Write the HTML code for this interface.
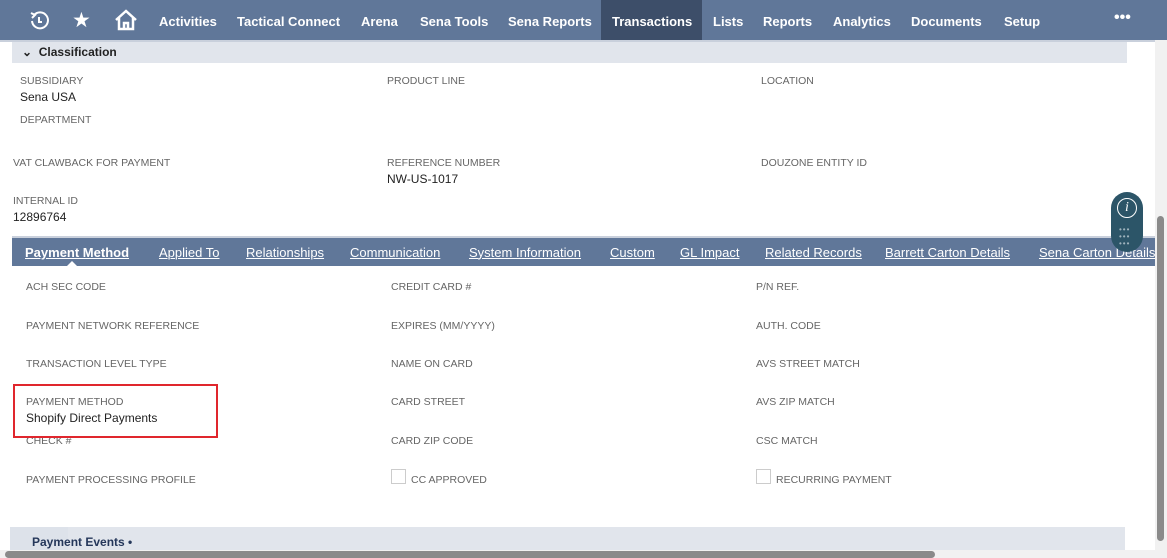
<!DOCTYPE html>
<html><head><meta charset="utf-8"><style>
*{margin:0;padding:0;box-sizing:border-box}
body{width:1167px;height:558px;overflow:hidden;background:#fff;font-family:"Liberation Sans",sans-serif;position:relative;color:#333}
.a{position:absolute;white-space:nowrap}
.nav{left:0;top:0;width:1167px;height:40px;background:#607799}
.ni{top:14px;color:#fff;font-size:13px;font-weight:bold}
.l{font-size:10.5px;color:#666}
.v{font-size:12px;color:#222}
.tab{top:245px;color:#fff;font-size:13px;text-decoration:underline;text-decoration-thickness:1px}
.cb{width:15px;height:15px;border:1px solid #ccc}
</style></head><body>
<div class="a nav"></div>
<div class="a" style="left:0;top:40px;width:1167px;height:2px;background:#c9d0dc"></div>
<svg class="a" style="left:28px;top:10px" width="22" height="22" viewBox="0 0 22 22"><path d="M6 5 A8 8 0 1 1 4 11" fill="none" stroke="#fff" stroke-width="2"/><path d="M3 3 L7 5 L4 8" fill="none" stroke="#fff" stroke-width="2"/><path d="M11 7 V12 H14" fill="none" stroke="#fff" stroke-width="2"/></svg>
<div class="a" style="left:72px;top:8px;color:#fff;font-size:21px">★</div>
<svg class="a" style="left:114px;top:9px" width="24" height="22" viewBox="0 0 24 22"><path d="M2 11 L12 2 L22 11 M5 9 V20 H19 V9 M10 20 V14 H14 V20" fill="none" stroke="#fff" stroke-width="2.5"/></svg>
<div class="a ni" style="left:159px">Activities</div>
<div class="a ni" style="left:237px">Tactical Connect</div>
<div class="a ni" style="left:361px">Arena</div>
<div class="a ni" style="left:420px">Sena Tools</div>
<div class="a ni" style="left:508px">Sena Reports</div>
<div class="a" style="left:601px;top:0;width:101px;height:40px;background:#3d4e69"></div>
<div class="a ni" style="left:612px">Transactions</div>
<div class="a ni" style="left:713px">Lists</div>
<div class="a ni" style="left:763px">Reports</div>
<div class="a ni" style="left:833px">Analytics</div>
<div class="a ni" style="left:911px">Documents</div>
<div class="a ni" style="left:1004px">Setup</div>
<div class="a ni" style="left:1114px;top:9px;font-size:16px">•••</div>

<div class="a" style="left:12px;top:42px;width:1115px;height:21px;background:#e1e5ec"></div>
<div class="a" style="left:22px;top:45px;font-size:12px;font-weight:bold;color:#222">⌄&nbsp; Classification</div>

<div class="a l" style="left:20px;top:75px">SUBSIDIARY</div>
<div class="a v" style="left:20px;top:90px">Sena USA</div>
<div class="a l" style="left:387px;top:75px">PRODUCT LINE</div>
<div class="a l" style="left:761px;top:75px">LOCATION</div>
<div class="a l" style="left:20px;top:114px">DEPARTMENT</div>
<div class="a l" style="left:13px;top:157px">VAT CLAWBACK FOR PAYMENT</div>
<div class="a l" style="left:387px;top:157px">REFERENCE NUMBER</div>
<div class="a v" style="left:387px;top:172px">NW-US-1017</div>
<div class="a l" style="left:761px;top:157px">DOUZONE ENTITY ID</div>
<div class="a l" style="left:13px;top:195px">INTERNAL ID</div>
<div class="a v" style="left:13px;top:210px">12896764</div>

<div class="a" style="left:12px;top:236px;width:1144px;height:2px;background:#c9d0dc"></div>
<div class="a" style="left:12px;top:238px;width:1144px;height:28px;background:#607799"></div>
<div class="a tab" style="left:25px;font-weight:bold">Payment Method</div>
<div class="a" style="left:66px;top:261px;width:0;height:0;border-left:6px solid transparent;border-right:6px solid transparent;border-bottom:6px solid #fff"></div>
<div class="a tab" style="left:159px">Applied To</div>
<div class="a tab" style="left:246px">Relationships</div>
<div class="a tab" style="left:350px">Communication</div>
<div class="a tab" style="left:469px">System Information</div>
<div class="a tab" style="left:610px">Custom</div>
<div class="a tab" style="left:680px">GL Impact</div>
<div class="a tab" style="left:765px">Related Records</div>
<div class="a tab" style="left:885px">Barrett Carton Details</div>
<div class="a tab" style="left:1039px">Sena Carton Details</div>

<div class="a" style="left:1111px;top:192px;width:32px;height:60px;border-radius:16px;background:#2c5568"></div>
<div class="a" style="left:1117px;top:198px;width:20px;height:20px;border:1.5px solid #fff;border-radius:50%;color:#fff;font-family:'Liberation Serif',serif;font-style:italic;font-size:14px;text-align:center;line-height:17px">i</div>
<div class="a" style="left:1119px;top:226px;color:#9fb3bd;font-size:8px;line-height:7px;letter-spacing:1px">•••<br>•••<br>•••</div>

<div class="a l" style="left:26px;top:281px">ACH SEC CODE</div>
<div class="a l" style="left:391px;top:281px">CREDIT CARD #</div>
<div class="a l" style="left:756px;top:281px">P/N REF.</div>
<div class="a l" style="left:26px;top:320px">PAYMENT NETWORK REFERENCE</div>
<div class="a l" style="left:391px;top:320px">EXPIRES (MM/YYYY)</div>
<div class="a l" style="left:756px;top:320px">AUTH. CODE</div>
<div class="a l" style="left:26px;top:358px">TRANSACTION LEVEL TYPE</div>
<div class="a l" style="left:391px;top:358px">NAME ON CARD</div>
<div class="a l" style="left:756px;top:358px">AVS STREET MATCH</div>
<div class="a l" style="left:26px;top:396px">PAYMENT METHOD</div>
<div class="a v" style="left:26px;top:411px">Shopify Direct Payments</div>
<div class="a l" style="left:391px;top:396px">CARD STREET</div>
<div class="a l" style="left:756px;top:396px">AVS ZIP MATCH</div>
<div class="a l" style="left:26px;top:435px">CHECK #</div>
<div class="a l" style="left:391px;top:435px">CARD ZIP CODE</div>
<div class="a l" style="left:756px;top:435px">CSC MATCH</div>
<div class="a" style="left:13px;top:384px;width:205px;height:54px;border:2px solid #e0262d"></div>
<div class="a l" style="left:26px;top:474px">PAYMENT PROCESSING PROFILE</div>
<div class="a cb" style="left:391px;top:469px"></div>
<div class="a l" style="left:411px;top:474px">CC APPROVED</div>
<div class="a cb" style="left:756px;top:469px"></div>
<div class="a l" style="left:776px;top:474px">RECURRING PAYMENT</div>

<div class="a" style="left:10px;top:527px;width:1115px;height:24px;background:#e1e5ec"></div>
<div class="a" style="left:10px;top:527px;width:58px;height:24px;background:#dde2ea"></div>
<div class="a" style="left:32px;top:535px;font-size:12px;font-weight:bold;color:#25375a">Payment Events •</div>

<div class="a" style="left:1155px;top:40px;width:12px;height:510px;background:#f1f1f1"></div>
<div class="a" style="left:1157px;top:216px;width:7px;height:325px;background:#8a8a8a;border-radius:4px"></div>
<div class="a" style="left:0;top:550px;width:1167px;height:8px;background:#f1f1f1"></div>
<div class="a" style="left:5px;top:551px;width:930px;height:7px;background:#8a8a8a;border-radius:4px"></div>
</body></html>
